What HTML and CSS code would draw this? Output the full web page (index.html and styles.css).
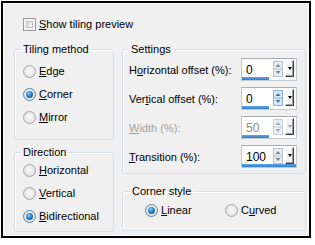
FILE: index.html
```html
<!DOCTYPE html>
<html>
<head>
  <meta charset="utf-8" />
  <title>Tiling options</title>
  <link rel="stylesheet" href="styles.css">
</head>
<body>
<div class="frame">
  <div class="panel">

    <!-- preview toggle -->
    <div class="check-row">
      <span class="checkbox"></span>
      <span><u>S</u>how tiling preview</span>
    </div>

    <div class="columns">

      <!-- LEFT COLUMN -->
      <div class="col col-left">
        <fieldset class="group group-tiling">
          <legend>Tiling method</legend>
          <div class="radio-row"><span class="radio"></span><span><u>E</u>dge</span></div>
          <div class="radio-row"><span class="radio checked"></span><span><u>C</u>orner</span></div>
          <div class="radio-row"><span class="radio"></span><span><u>M</u>irror</span></div>
        </fieldset>

        <fieldset class="group group-direction">
          <legend>Direction</legend>
          <div class="radio-row"><span class="radio"></span><span><u>H</u>orizontal</span></div>
          <div class="radio-row"><span class="radio"></span><span><u>V</u>ertical</span></div>
          <div class="radio-row"><span class="radio checked"></span><span><u>B</u>idirectional</span></div>
        </fieldset>
      </div>

      <!-- RIGHT COLUMN -->
      <div class="col col-right">
        <fieldset class="group group-settings">
          <legend>Settings</legend>
          <div class="settings-grid">
            <span class="field-label">H<u>o</u>rizontal offset (%):</span>
            <div class="spin">
              <div class="spin-top">
                <span class="spin-value">0</span>
                <svg class="spin-arrows" width="10" height="16" viewBox="0 0 10 16">
                  <rect x="0.5" y="0.5" width="9" height="15" fill="#e9eef3" stroke="#b7c2cc"/>
                  <line x1="1" y1="8" x2="9" y2="8" stroke="#b7c2cc"/>
                  <path d="M2.5 6 L5 3 L7.5 6 Z" fill="#7a8a99"/>
                  <path d="M2.5 10 L7.5 10 L5 13 Z" fill="#7a8a99"/>
                </svg>
                <span class="spin-drop"><span class="tri"></span></span>
              </div>
              <div class="spin-track"><div class="spin-bar" style="width:50%"></div></div>
            </div>

            <span class="field-label">Ver<u>t</u>ical offset (%):</span>
            <div class="spin">
              <div class="spin-top">
                <span class="spin-value">0</span>
                <svg class="spin-arrows" width="10" height="16" viewBox="0 0 10 16">
                  <rect x="0.5" y="0.5" width="9" height="15" fill="#dde9f6" stroke="#8fb0d2"/>
                  <line x1="1" y1="8" x2="9" y2="8" stroke="#8fb0d2"/>
                  <path d="M2.5 6 L5 3 L7.5 6 Z" fill="#3c78b8"/>
                  <path d="M2.5 10 L7.5 10 L5 13 Z" fill="#3c78b8"/>
                </svg>
                <span class="spin-drop"><span class="tri"></span></span>
              </div>
              <div class="spin-track"><div class="spin-bar" style="width:50%"></div></div>
            </div>

            <span class="field-label disabled"><u>W</u>idth (%):</span>
            <div class="spin disabled">
              <div class="spin-top">
                <span class="spin-value">50</span>
                <svg class="spin-arrows" width="10" height="16" viewBox="0 0 10 16">
                  <rect x="0.5" y="0.5" width="9" height="15" fill="#eef1f4" stroke="#c6ced6"/>
                  <line x1="1" y1="8" x2="9" y2="8" stroke="#c6ced6"/>
                  <path d="M2.5 6 L5 3 L7.5 6 Z" fill="#9aa6b2"/>
                  <path d="M2.5 10 L7.5 10 L5 13 Z" fill="#9aa6b2"/>
                </svg>
                <span class="spin-drop"><span class="tri"></span></span>
              </div>
              <div class="spin-track"><div class="spin-bar" style="width:50%"></div></div>
            </div>

            <span class="field-label"><u>T</u>ransition (%):</span>
            <div class="spin">
              <div class="spin-top">
                <span class="spin-value">100</span>
                <svg class="spin-arrows" width="10" height="16" viewBox="0 0 10 16">
                  <rect x="0.5" y="0.5" width="9" height="15" fill="#e9eef3" stroke="#b7c2cc"/>
                  <line x1="1" y1="8" x2="9" y2="8" stroke="#b7c2cc"/>
                  <path d="M2.5 6 L5 3 L7.5 6 Z" fill="#7a8a99"/>
                  <path d="M2.5 10 L7.5 10 L5 13 Z" fill="#7a8a99"/>
                </svg>
                <span class="spin-drop"><span class="tri"></span></span>
              </div>
              <div class="spin-track"><div class="spin-bar" style="width:100%"></div></div>
            </div>
          </div>
        </fieldset>

        <fieldset class="group group-corner">
          <legend>Corner style</legend>
          <div class="corner-row">
            <div class="radio-row"><span class="radio checked"></span><span><u>L</u>inear</span></div>
            <div class="radio-row"><span class="radio"></span><span>C<u>u</u>rved</span></div>
          </div>
        </fieldset>
      </div>

    </div>
  </div>
</div>
</body>
</html>
```

FILE: styles.css
```css
html, body {
  margin: 0;
  padding: 0;
  background: #fff;
  font-family: "Liberation Sans", Arial, sans-serif;
  font-size: 11px;
  color: #000;
  box-sizing: border-box;
}
*, *::before, *::after {
  box-sizing: inherit;
}

u {
  text-decoration: underline;
  text-underline-offset: 1px;
}

/* Outer dialog frame */
.frame {
  margin: 1px 0 0 1px;
  width: 310px;
  height: 237px;
  border: 2px solid #000;
  padding: 1px;
  background: #fff;
}
.panel {
  height: 100%;
  background: #f0f0f0;
  padding: 12px 0 0 10px;
}

/* Checkbox row */
.check-row {
  display: flex;
  align-items: center;
  height: 16px;
  padding-left: 9px;
  line-height: 13px;
}
.checkbox {
  width: 13px;
  height: 13px;
  margin-right: 3px;
  border: 1px solid #9a9a9a;
  background: #f4f4f4;
  position: relative;
}
.checkbox::after {
  content: "";
  position: absolute;
  left: 2px;
  top: 2px;
  width: 7px;
  height: 7px;
  border: 1px solid #c2c2c2;
  background: linear-gradient(135deg, #d6d6d6, #f8f8f8);
}

/* Columns */
.columns {
  display: flex;
  gap: 8px;
  margin-top: 11px;
}
.col {
  display: flex;
  flex-direction: column;
}
.col-left {
  width: 100px;
}
.col-right {
  width: 184px;
}

/* Group boxes */
.group {
  margin: 0;
  min-inline-size: 0;
  border: 1px solid #d5dfe5;
  border-radius: 3px;
  box-shadow: inset 1px 1px 0 #fff;
}
.group > legend {
  padding: 0 2px;
  margin-left: -2px;
  line-height: 13px;
}
.group-tiling {
  padding: 4px 8px 10px 8px;
}
.group-direction {
  margin-top: 6px;
  padding: 0 8px 3px 8px;
}
.group-settings {
  padding: 2px 8px 5px 6px;
}
.group-settings > legend {
  margin-left: 0;
}
.group-corner {
  margin-top: 11px;
  padding: 1px 8px 8px 22px;
}
.group-corner > legend {
  margin-left: -15px;
}

/* Radio buttons */
.radio-row {
  display: flex;
  align-items: center;
  height: 23px;
  line-height: 13px;
}
.radio {
  width: 13px;
  height: 13px;
  margin-right: 3px;
  border-radius: 50%;
  border: 1px solid #a6a6a6;
  background: radial-gradient(circle at 50% 45%, #f9f9f9 0%, #e9e9e9 55%, #d6d6d6 100%);
  position: relative;
  flex: 0 0 auto;
}
.radio.checked {
  border-color: #5b84a8;
}
.radio.checked::after {
  content: "";
  position: absolute;
  left: 2px;
  top: 2px;
  width: 7px;
  height: 7px;
  border-radius: 50%;
  background: radial-gradient(circle at 40% 35%, #8fd0f5 0%, #2a7fc2 45%, #0f3f78 100%);
}

.corner-row {
  display: grid;
  grid-template-columns: 80px auto;
}

/* Settings grid */
.settings-grid {
  display: grid;
  grid-template-columns: 112px 56px;
  grid-auto-rows: 23px;
  row-gap: 6px;
  align-items: center;
}
.field-label.disabled {
  color: #a3a3a3;
}

/* Spin / slider edit */
.spin {
  height: 23px;
  border: 1px solid #c4c9d0;
  border-top-color: #abadb3;
  background: #fff;
  display: flex;
  flex-direction: column;
}
.spin-top {
  flex: 1 1 auto;
  display: flex;
  align-items: center;
  padding: 1px 2px 0 4px;
}
.spin-value {
  flex: 1 1 auto;
  font-size: 12px;
  line-height: 14px;
  padding-top: 2px;
}
.spin.disabled .spin-value {
  color: #8a8a8a;
}
.spin-arrows {
  flex: 0 0 auto;
  margin-right: 2px;
}
.spin-drop {
  flex: 0 0 auto;
  width: 9px;
  height: 17px;
  background: #f4f4f4;
  border: 1px solid;
  border-color: #fff #404040 #404040 #fff;
  box-shadow: inset -1px -1px 0 #a0a0a0;
  display: flex;
  align-items: center;
  justify-content: center;
}
.spin-drop .tri {
  width: 0;
  height: 0;
  border-left: 2.5px solid transparent;
  border-right: 2.5px solid transparent;
  border-top: 3px solid #000;
}
.spin.disabled .spin-drop .tri {
  border-top-color: #a0a0a0;
}
.spin-track {
  height: 3px;
}
.spin-bar {
  height: 3px;
  background: linear-gradient(#5fa4e6, #2f7fd2);
}
```
